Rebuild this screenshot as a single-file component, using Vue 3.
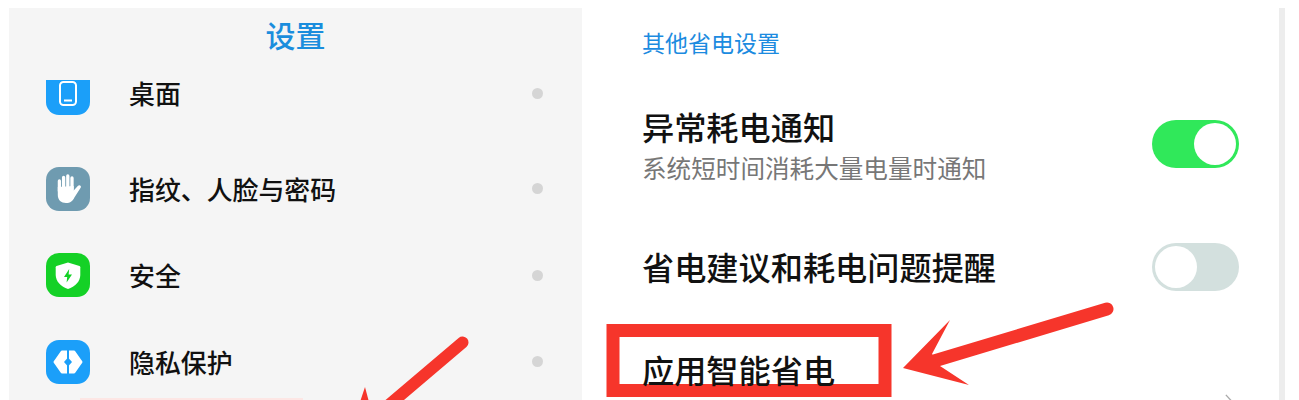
<script setup>
const menu = [
  { name: "桌面", icon: "phone" },
  { name: "指纹、人脸与密码", icon: "hand" },
  { name: "安全", icon: "shield" },
  { name: "隐私保护", icon: "privacy" },
];
</script>

<template>
  <div class="page">
    <section class="settings">
      <h1 class="title">设置</h1>
      <ul class="menu">
        <li v-for="item in menu" :key="item.name" class="menu-row">
          <span class="menu-icon" :class="item.icon">
            <svg v-if="item.icon === 'phone'" viewBox="0 0 44 44">
              <rect x="14" y="11" width="16" height="23" rx="3.5" fill="none" stroke="#fff" stroke-width="2" />
              <path d="M18 29.5h8" stroke="#fff" stroke-width="2" />
            </svg>
            <svg v-else-if="item.icon === 'hand'" viewBox="0 0 44 44">
              <path d="M13.4 24V14M17.6 22V10.5M21.8 22V9M26 22V11" stroke="#fff" stroke-width="3.3" stroke-linecap="round" />
              <path d="M11.8 20V28C11.8 33 15.2 36 20 36C24.5 36 26.8 34 28.4 30.5L34.8 20.5C35.6 18.6 33.2 17.4 31.8 19L27.7 23.5V19Z" fill="#fff" />
            </svg>
            <svg v-else-if="item.icon === 'shield'" viewBox="0 0 44 44">
              <path d="M22 9.5L33.5 13C34 13.2 34.3 13.6 34.3 14.2V22C34.3 28.5 29 33.5 22 36C15 33.5 9.7 28.5 9.7 22V14.2C9.7 13.6 10 13.2 10.5 13Z" fill="#fff" />
              <path d="M23.2 16L18 24H21.2L20.6 29.5L26 21.5H22.6Z" fill="#14d126" />
            </svg>
            <svg v-else viewBox="0 0 44 44">
              <path d="M16 12H28L35 22L28 32H16L9 22Z" fill="#fff" stroke="#fff" stroke-width="3" stroke-linejoin="round" />
              <path d="M22 8V36" stroke="#1b9ff9" stroke-width="2" />
              <path d="M22 17.5L26 22L22 26.5L18 22Z" fill="#1b9ff9" />
            </svg>
          </span>
          <span class="menu-name">{{ item.name }}</span>
          <span class="menu-dot"></span>
        </li>
      </ul>
    </section>

    <section class="power">
      <h2 class="section-label">其他省电设置</h2>

      <div class="option first">
        <div>
          <div class="option-name">异常耗电通知</div>
          <div class="option-desc">系统短时间消耗大量电量时通知</div>
        </div>
        <span class="switch on"><i></i></span>
      </div>

      <div class="option second">
        <div class="option-name">省电建议和耗电问题提醒</div>
        <span class="switch"><i></i></span>
      </div>

      <div class="option third">
        <div class="option-name above-marks">应用智能省电</div>
        <svg class="chevron" viewBox="0 0 14 14">
          <path d="M1 1L13 14" fill="none" stroke="#a9a9a9" stroke-width="1.6" />
        </svg>
      </div>
    </section>

    <div class="stripe"></div>

    <!-- red annotations drawn on top of the screenshot -->
    <div class="pink-edge"></div>
    <svg class="marks" viewBox="0 0 1299 400">
      <rect x="613" y="330.5" width="272" height="60" fill="none" stroke="#f6352b" stroke-width="13" />
      <path d="M462.5 342.5L390 404" stroke="#f6352b" stroke-width="12" stroke-linecap="round" />
      <path d="M365 387L360 402H369Z" fill="#f6352b" />
      <path d="M1107 309L934 361" stroke="#f6352b" stroke-width="13" stroke-linecap="round" />
      <path d="M903 368L950 320L932 354L940 366L969 385Z" fill="#f6352b" />
    </svg>
  </div>
</template>

<style scoped>
.page {
  position: relative;
  display: flex;
  box-sizing: border-box;
  height: 400px;
  padding: 8px 0 0 9px;
  overflow: hidden;
  background: #fff;
  font-family: "Noto Sans CJK SC", "Noto Sans", sans-serif;
  color: #111;
}

.settings {
  display: flex;
  flex-direction: column;
  flex: none;
  width: 573px;
  background: #f5f5f5;
}

.title {
  height: 72px;
  margin: 0;
  padding-top: 5px;
  box-sizing: border-box;
  text-align: center;
  font-size: 30px;
  line-height: 42px;
  font-weight: 500;
  color: #1a8ddd;
}

.menu {
  display: flex;
  flex-direction: column;
  flex: 1;
  gap: 42.5px;
  margin: 0;
  padding: 0 39px 0 37px;
  list-style: none;
}

.menu-row {
  display: flex;
  flex: none;
  align-items: center;
  height: 44px;
}

.menu-row:first-child {
  margin: -9px 0 9px;
}

.menu-icon {
  flex: none;
  width: 44px;
  height: 44px;
  margin-right: 39px;
  border-radius: 13px;
}

/* the list has scrolled: only the lower part of the first icon still shows */
.menu-icon.phone {
  align-self: flex-end;
  height: 35px;
  overflow: hidden;
  border-radius: 0 0 13px 13px;
}

.menu-icon.phone svg {
  margin-top: -9px;
}

.menu-icon svg {
  display: block;
  width: 44px;
  height: 44px;
}

.phone,
.privacy {
  background: #1b9ff9;
}

.hand {
  background: #6f9bb0;
}

.shield {
  background: #14d126;
}

.menu-name {
  flex: 1;
  font-size: 25.9px;
  line-height: 26px;
  font-weight: 500;
}

.menu-dot {
  width: 11px;
  height: 11px;
  border-radius: 50%;
  background: #d5d5d5;
}

.power {
  flex: 1;
  padding: 18px 40px 0 60px;
}

.section-label {
  margin: 0;
  font-size: 23px;
  line-height: 32px;
  font-weight: 400;
  color: #1c8be0;
}

.option {
  display: flex;
  justify-content: space-between;
}

.first {
  margin-top: 48px;
}

.second {
  align-items: center;
  margin-top: 59px;
}

.second .option-name {
  margin-top: -2px;
}

.third {
  margin-top: 58px;
}

.option-name {
  font-size: 32.2px;
  line-height: 40px;
  font-weight: 500;
}

.above-marks {
  position: relative;
  z-index: 2;
}

.option-desc {
  margin-top: 4px;
  font-size: 24.6px;
  line-height: 34px;
  color: #777;
}

.switch {
  display: flex;
  flex: none;
  box-sizing: border-box;
  width: 87px;
  height: 48px;
  padding: 3px;
  border-radius: 24px;
  background: #d3e0de;
}

.first .switch {
  margin-top: 14px;
}

.switch.on {
  justify-content: flex-end;
  background: #30e85a;
}

.switch i {
  width: 42px;
  height: 42px;
  border-radius: 50%;
  background: #fff;
}

.chevron {
  flex: none;
  width: 12px;
  height: 14px;
  margin: 44px 2px 0 0;
}

.stripe {
  flex: none;
  width: 6px;
  margin-right: 14px;
  background: #ededed;
}

.pink-edge {
  position: absolute;
  left: 80px;
  bottom: 0;
  width: 223px;
  height: 2px;
  background: #fde6e4;
}

.marks {
  position: absolute;
  top: 0;
  left: 0;
  width: 1299px;
  height: 400px;
  pointer-events: none;
}
</style>
